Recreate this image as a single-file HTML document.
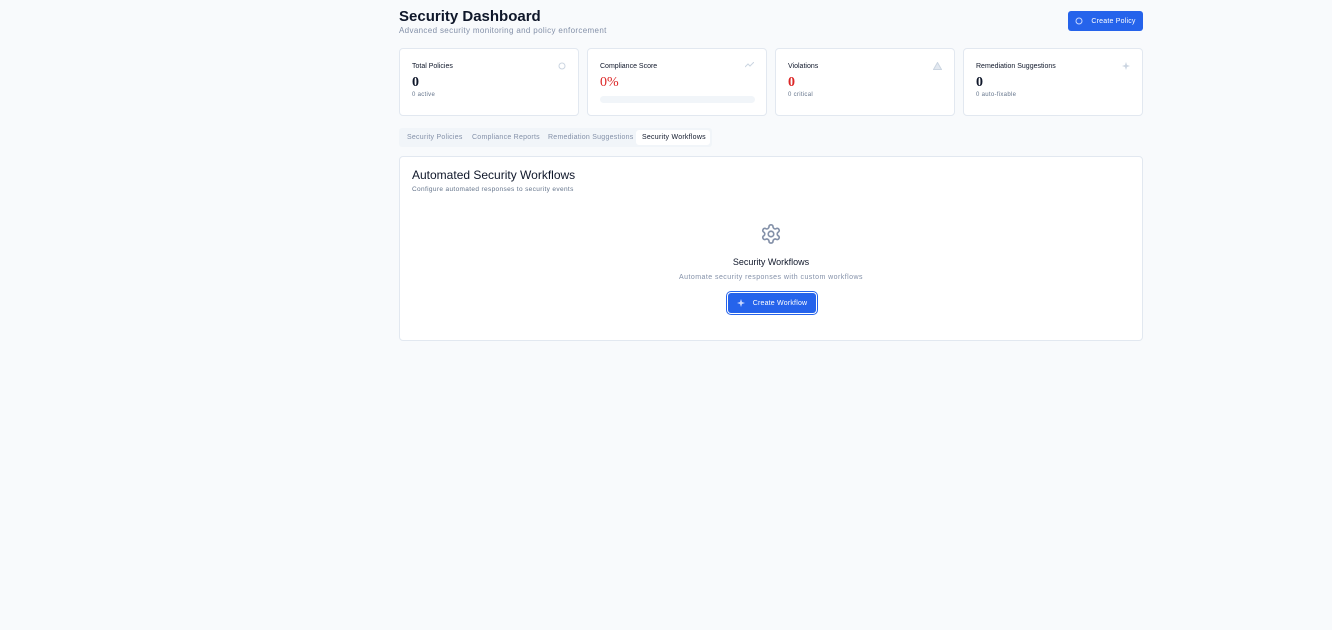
<!DOCTYPE html>
<html><head><style>
*{box-sizing:border-box;margin:0;padding:0}
body{width:1332px;height:630px;background:#f8fafc;font-family:"Liberation Sans",sans-serif;position:relative;overflow:hidden;color:#0f172a}
.abs{position:absolute}
h1{position:absolute;left:399px;top:8px;font-size:15px;font-weight:bold;color:#0f172a}
.sub{left:399px;top:26px;font-size:8px;color:#8390a8;letter-spacing:0.35px}
.btn{background:#2563eb;color:#fff;border-radius:3px;font-size:7px;display:flex;align-items:center;justify-content:center;gap:8px;letter-spacing:0.2px}
.card{top:48px;width:180px;height:68px;background:#fff;border:1px solid #e2e8f0;border-radius:4px}
.card .l{position:absolute;left:12px;top:14px;font-size:7px;color:#0f172a}
.card .v{position:absolute;left:12px;top:26px;font-size:14px;font-family:"Liberation Serif",serif;font-weight:bold}
.card .s{position:absolute;left:12px;top:43px;font-size:6px;color:#64748b;letter-spacing:0.3px}
.card svg{position:absolute;right:12px;top:13px}
.tabs{left:399px;top:128px;width:313px;height:19px;background:#f1f5f9;border-radius:3px;font-size:7px;color:#8390a8;letter-spacing:0.25px}
.tabs span{position:absolute;top:6px}
.panel{left:399px;top:156px;width:744px;height:185px;background:#fff;border:1px solid #e2e8f0;border-radius:4px}
</style></head><body>
<h1>Security Dashboard</h1>
<div class="abs sub">Advanced security monitoring and policy enforcement</div>
<div class="abs btn" style="left:1068px;top:11px;width:75px;height:20px"><svg width="8" height="8" viewBox="0 0 8 8"><circle cx="4" cy="4" r="3" fill="none" stroke="#c7d6ff" stroke-width="1"/></svg>Create Policy</div>

<div class="abs card" style="left:399px"><div class="l">Total Policies</div><div class="v">0</div><div class="s">0 active</div><svg width="8" height="8"><circle cx="4" cy="4" r="3" fill="none" stroke="#cbd5e1"/></svg></div>
<div class="abs card" style="left:587px"><div class="l">Compliance Score</div><div class="v" style="color:#dc2626;font-weight:normal">0%</div><div class="abs" style="left:12px;top:47px;width:155px;height:7px;background:#f1f5f9;border-radius:4px"></div><svg width="9" height="6"><path d="M0 5 L3 2 L5 4 L9 0" fill="none" stroke="#cbd5e1"/></svg></div>
<div class="abs card" style="left:775px"><div class="l">Violations</div><div class="v" style="color:#dc2626">0</div><div class="s">0 critical</div><svg width="9" height="8"><path d="M4.5 0.5 L8.5 7.5 L0.5 7.5Z" fill="#e2e8f0" stroke="#cbd5e1"/></svg></div>
<div class="abs card" style="left:963px"><div class="l">Remediation Suggestions</div><div class="v">0</div><div class="s">0 auto-fixable</div><svg width="8" height="8"><path d="M4 0 L5 3 L8 4 L5 5 L4 8 L3 5 L0 4 L3 3Z" fill="#cbd5e1"/></svg></div>

<div class="abs tabs"><span style="left:8px">Security Policies</span><span style="left:73px">Compliance Reports</span><span style="left:149px">Remediation Suggestions</span><div class="abs" style="left:237px;top:2px;width:74px;height:15px;background:#fff;border-radius:3px"></div><span style="left:243px;color:#0f172a">Security Workflows</span></div>

<div class="abs panel">
<div class="abs" style="left:12px;top:11px;font-size:12px;color:#0f172a">Automated Security Workflows</div>
<div class="abs" style="left:12px;top:29px;font-size:6.5px;color:#64748b;letter-spacing:0.35px">Configure automated responses to security events</div>
<svg class="abs" style="left:360px;top:66px" width="22" height="22" viewBox="0 0 24 24" fill="none" stroke="#8390a8" stroke-width="1.8"><path d="M12.2 2h-.4a2 2 0 0 0-2 2v.2a2 2 0 0 1-1 1.7l-.4.3a2 2 0 0 1-2 0l-.2-.1a2 2 0 0 0-2.7.7l-.2.4a2 2 0 0 0 .7 2.7l.2.1a2 2 0 0 1 1 1.7v.5a2 2 0 0 1-1 1.7l-.2.1a2 2 0 0 0-.7 2.7l.2.4a2 2 0 0 0 2.7.7l.2-.1a2 2 0 0 1 2 0l.4.3a2 2 0 0 1 1 1.7v.2a2 2 0 0 0 2 2h.4a2 2 0 0 0 2-2v-.2a2 2 0 0 1 1-1.7l.4-.3a2 2 0 0 1 2 0l.2.1a2 2 0 0 0 2.7-.7l.2-.4a2 2 0 0 0-.7-2.7l-.2-.1a2 2 0 0 1-1-1.7v-.5a2 2 0 0 1 1-1.7l.2-.1a2 2 0 0 0 .7-2.7l-.2-.4a2 2 0 0 0-2.7-.7l-.2.1a2 2 0 0 1-2 0l-.4-.3a2 2 0 0 1-1-1.7V4a2 2 0 0 0-2-2z"/><circle cx="12" cy="12" r="3"/></svg>
<div class="abs" style="left:0;width:742px;top:100px;text-align:center;font-size:9px;color:#0f172a">Security Workflows</div>
<div class="abs" style="left:0;width:742px;top:117px;text-align:center;font-size:7px;color:#8390a8;letter-spacing:0.45px">Automate security responses with custom workflows</div>
<div class="abs btn" style="left:328px;top:136px;width:88px;height:20px;box-shadow:0 0 0 1px #fff,0 0 0 2px #2563eb"><svg width="8" height="8"><path d="M4 0 L5 3 L8 4 L5 5 L4 8 L3 5 L0 4 L3 3Z" fill="#c7d6ff"/></svg>Create Workflow</div>
</div>
</body></html>
